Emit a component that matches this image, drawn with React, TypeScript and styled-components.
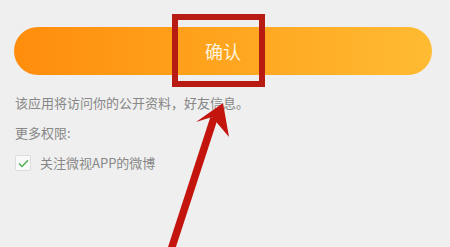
import React from 'react';
import styled, { createGlobalStyle } from 'styled-components';

const GlobalStyle = createGlobalStyle`
  html, body {
    margin: 0;
    padding: 0;
    background: #efefef;
  }
  body {
    font-family: "Noto Sans CJK SC", "Noto Sans", sans-serif;
  }
`;

const Page = styled.div`
  position: relative;
  width: 450px;
  height: 247px;
  overflow: hidden;
  padding: 27px 18px 0 14px;
  box-sizing: border-box;
`;

const ConfirmButton = styled.button`
  display: flex;
  align-items: center;
  justify-content: center;
  width: 100%;
  height: 48px;
  border: none;
  border-radius: 24px;
  background: linear-gradient(90deg, #ff8d0c 0%, #ffa21c 45%, #ffbb33 100%);
  color: #fff4dc;
  font-family: inherit;
  font-size: 18px;
  padding: 0;
  cursor: pointer;
`;

const Info = styled.div`
  display: flex;
  flex-direction: column;
  gap: 12px;
  margin-top: 19px;
  padding-left: 1px;
`;

const Line = styled.div`
  font-size: 13px;
  line-height: 18px;
  color: #878787;
  display: flex;
  align-items: center;
  gap: 9px;
`;

const CheckBox = styled.span`
  width: 14px;
  height: 14px;
  border: 1px solid #dcdcdc;
  border-radius: 2px;
  background: #fafafa;
  display: flex;
  align-items: center;
  justify-content: center;
`;

const Highlight = styled.div`
  position: absolute;
  left: 172px;
  top: 14px;
  width: 93px;
  height: 73px;
  border: 6px solid #b81b12;
  box-sizing: border-box;
`;

const Arrow = styled.svg`
  position: absolute;
  left: 0;
  top: 0;
  pointer-events: none;
`;

export default function App() {
  return (
    <>
      <GlobalStyle />
      <Page>
        <ConfirmButton>确认</ConfirmButton>
        <Info>
          <Line>该应用将访问你的公开资料，好友信息。</Line>
          <Line>更多权限:</Line>
          <Line>
            <CheckBox>
              <svg width="11" height="9" viewBox="0 0 11 9">
                <path d="M1 4.6 L4 7.4 L10 1.2" fill="none" stroke="#4cb050" strokeWidth="1.4" />
              </svg>
            </CheckBox>
            关注微视APP的微博
          </Line>
        </Info>
        <Highlight />
        <Arrow width="450" height="247" viewBox="0 0 450 247">
          <path d="M171 250 L214 118" stroke="#c3150e" strokeWidth="7.5" fill="none" />
          <path d="M223 103 L196 122 L212 117 L229 137 Z" fill="#c3150e" />
        </Arrow>
      </Page>
    </>
  );
}
